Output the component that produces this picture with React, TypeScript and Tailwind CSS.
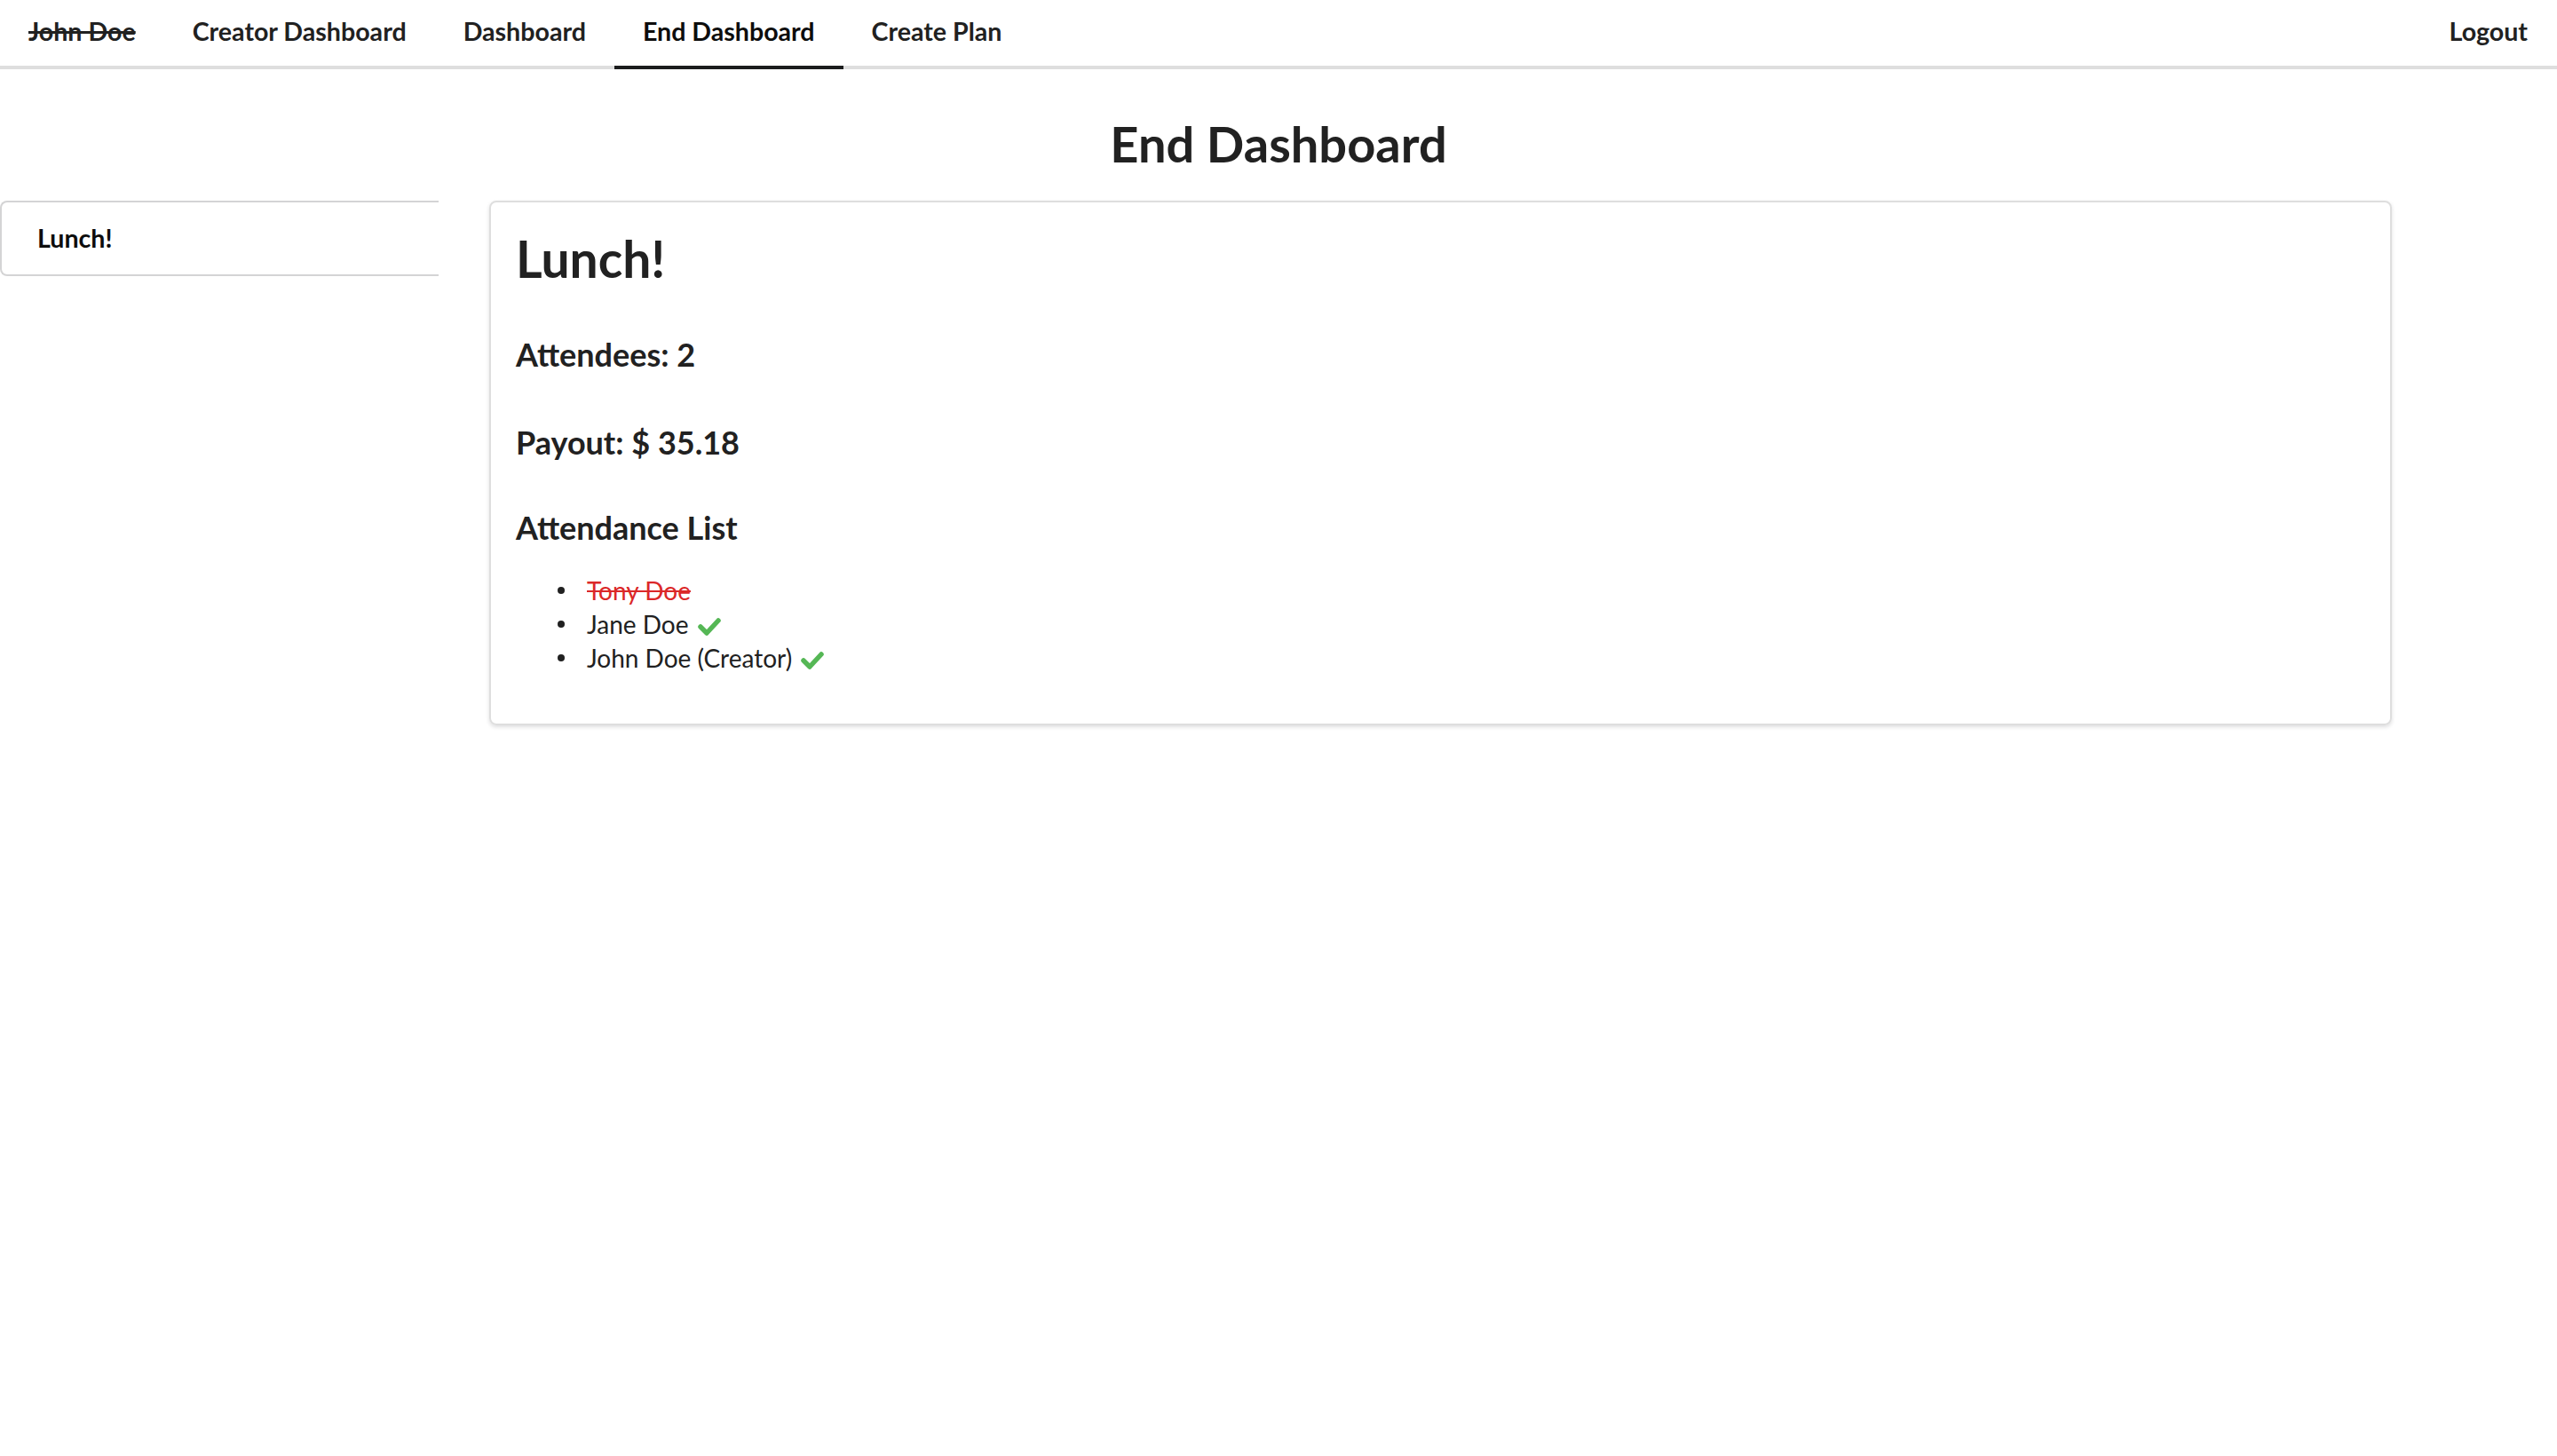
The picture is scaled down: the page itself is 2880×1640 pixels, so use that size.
import React from "react";

const navItems = [
  { label: "John Doe", struck: true },
  { label: "Creator Dashboard" },
  { label: "Dashboard" },
  { label: "End Dashboard", active: true },
  { label: "Create Plan" },
];

const attendees = [
  { name: "Tony Doe", present: false },
  { name: "Jane Doe", present: true },
  { name: "John Doe (Creator)", present: true },
];

const Check = () => (
  <svg viewBox="0 0 26 20" className="ml-[10px] inline-block h-[20px] w-[26px] align-[-2px]">
    <polyline
      points="3,10 10,17 23,3"
      fill="none"
      stroke="#55b755"
      strokeWidth="5.5"
      strokeLinecap="round"
      strokeLinejoin="round"
    />
  </svg>
);

export default function App() {
  return (
    <div className="min-h-screen bg-white font-['Lato','Open_Sans',sans-serif] text-[#212121]">
      {/* Top menu */}
      <nav className="flex h-[78px] items-start border-b-4 border-[#dedede]">
        {navItems.map((item) => (
          <a
            key={item.label}
            className={
              "-mb-[4px] h-[78px] border-b-4 px-[32px] pt-[21px] text-[28.6px] font-bold leading-none " +
              (item.active ? "border-[#1b1c1d] text-[#0d0d0d]" : "border-transparent text-[#212121]")
            }
          >
            <span className={item.struck ? "line-through decoration-[3px]" : ""}>{item.label}</span>
          </a>
        ))}
        <a className="-mb-[4px] ml-auto h-[78px] border-b-4 border-transparent px-[33px] pt-[21px] text-[28.6px] font-bold leading-none">
          Logout
        </a>
      </nav>

      <h1 className="mt-[56px] text-center text-[56px] font-bold leading-none">End Dashboard</h1>

      <div className="mt-[36px] flex items-start gap-[57px]">
        {/* Plan list */}
        <div className="w-[494px] rounded-l-[8px] border-y-2 border-l-2 border-[#d4d4d5] px-[40px] py-[26px] text-[28.6px] font-bold leading-none text-[#0d0d0d]">
          Lunch!
        </div>

        {/* Plan details */}
        <div className="w-[2143px] rounded-[8px] border-2 border-[#dedede] p-[28px] shadow-[0_2px_4px_0_rgba(34,36,38,0.15)]">
          <h1 className="mt-[7px] text-[57px] font-bold leading-none">Lunch!</h1>
          <h3 className="mt-[61px] text-[36px] font-bold leading-none">Attendees: 2</h3>
          <h3 className="mt-[63px] text-[36px] font-bold leading-none">Payout: $ 35.18</h3>
          <h3 className="mt-[60px] text-[36px] font-bold leading-none">Attendance List</h3>
          <ul className="mt-[34px] mb-[27px] text-[28px] leading-[38px]">
            {attendees.map((a) => (
              <li key={a.name} className="flex items-center">
                <span className="ml-[47px] mr-[25px] h-[8px] w-[8px] rounded-full bg-[#212121]" />
                {a.present ? (
                  <span>
                    {a.name}
                    <Check />
                  </span>
                ) : (
                  <span className="text-[#db2828] line-through">{a.name}</span>
                )}
              </li>
            ))}
          </ul>
        </div>
      </div>
    </div>
  );
}
